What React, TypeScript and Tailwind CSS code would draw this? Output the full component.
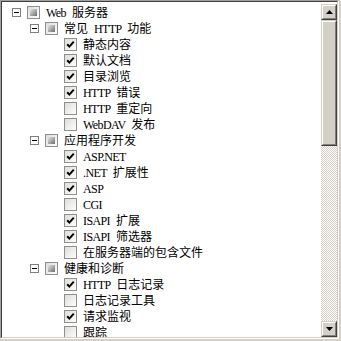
import React from 'react';

type State = 'on' | 'off' | 'mixed';

interface Item {
  label: string;
  level: 1 | 2 | 3;
  state: State;
  open?: boolean;
}

const items: Item[] = [
  { label: 'Web 服务器', level: 1, state: 'mixed', open: true },
  { label: '常见 HTTP 功能', level: 2, state: 'mixed', open: true },
  { label: '静态内容', level: 3, state: 'on' },
  { label: '默认文档', level: 3, state: 'on' },
  { label: '目录浏览', level: 3, state: 'on' },
  { label: 'HTTP 错误', level: 3, state: 'on' },
  { label: 'HTTP 重定向', level: 3, state: 'off' },
  { label: 'WebDAV 发布', level: 3, state: 'off' },
  { label: '应用程序开发', level: 2, state: 'mixed', open: true },
  { label: 'ASP.NET', level: 3, state: 'on' },
  { label: '.NET 扩展性', level: 3, state: 'on' },
  { label: 'ASP', level: 3, state: 'on' },
  { label: 'CGI', level: 3, state: 'off' },
  { label: 'ISAPI 扩展', level: 3, state: 'on' },
  { label: 'ISAPI 筛选器', level: 3, state: 'on' },
  { label: '在服务器端的包含文件', level: 3, state: 'off' },
  { label: '健康和诊断', level: 2, state: 'mixed', open: true },
  { label: 'HTTP 日志记录', level: 3, state: 'on' },
  { label: '日志记录工具', level: 3, state: 'off' },
  { label: '请求监视', level: 3, state: 'on' },
  { label: '跟踪', level: 3, state: 'off' },
];

const indent = {
  1: 'pl-[10px]',
  2: 'pl-[28px]',
  3: 'pl-[47px]',
};

function Label({ text }: { text: string }) {
  // ascii runs get a thin serif face, cjk stays in Noto
  const parts = text.split(/([\x20-\x7e]+)/).filter(Boolean);
  return (
    <span className="whitespace-pre">
      {parts.map((p, i) =>
        /^[\x20-\x7e]+$/.test(p) ? (
          <span
            key={i}
            className="font-['Liberation_Serif',serif] tracking-[-0.6px] [word-spacing:3.6px]"
          >
            {p}
          </span>
        ) : (
          <span key={i}>{p}</span>
        )
      )}
    </span>
  );
}

function Check({ state }: { state: State }) {
  return (
    <svg width="13" height="13" viewBox="0 0 13 13" className="shrink-0">
      <defs>
        <linearGradient id="cbBg" x1="0" y1="0" x2="1" y2="1">
          <stop offset="0" stopColor="#dcdcd7" />
          <stop offset="1" stopColor="#ffffff" />
        </linearGradient>
        <linearGradient id="cbMix" x1="0" y1="0" x2="1" y2="1">
          <stop offset="0" stopColor="#e6e6e6" />
          <stop offset="1" stopColor="#6e6e6e" />
        </linearGradient>
      </defs>
      <rect x="0.5" y="0.5" width="12" height="12" fill="url(#cbBg)" stroke="#8e8f8f" />
      {state === 'on' && (
        <path d="M3.2 6.2 L5.4 8.6 L9.8 3.6" stroke="#000" strokeWidth="2" fill="none" />
      )}
      {state === 'mixed' && <rect x="3" y="3" width="7" height="7" fill="url(#cbMix)" />}
    </svg>
  );
}

function Expander() {
  return (
    <span className="w-[9px] h-[9px] border border-[#808080] bg-white flex items-center justify-center shrink-0">
      <span className="w-[5px] h-px bg-black" />
    </span>
  );
}

function ArrowButton({ up }: { up?: boolean }) {
  return (
    <div className="w-4 h-4 bg-[#d4d0c8] border border-t-[#d4d0c8] border-l-[#d4d0c8] border-r-[#404040] border-b-[#404040] shrink-0">
      <div className="w-full h-full border border-t-white border-l-white border-r-[#808080] border-b-[#808080] flex items-center justify-center">
        <svg width="7" height="4" viewBox="0 0 7 4">
          {up ? (
            <path d="M3.5 0 L7 4 L0 4 Z" fill="#000" />
          ) : (
            <path d="M0 0 L7 0 L3.5 4 Z" fill="#000" />
          )}
        </svg>
      </div>
    </div>
  );
}

function Scrollbar() {
  return (
    <div className="w-4 flex flex-col mt-[2px]">
      <ArrowButton up />
      <div className="flex-1 flex flex-col bg-[repeating-conic-gradient(#d4d0c8_0%_25%,#ffffff_0%_50%)] bg-[length:2px_2px]">
        <div className="h-[126px] bg-[#d4d0c8] border border-t-[#d4d0c8] border-l-[#d4d0c8] border-r-[#404040] border-b-[#404040]">
          <div className="w-full h-full border border-t-white border-l-white border-r-[#808080] border-b-[#808080]" />
        </div>
      </div>
      <ArrowButton />
    </div>
  );
}

export default function App() {
  return (
    <div className="w-[341px] h-[341px] bg-[#d4d0c8] overflow-hidden">
      <div className="w-[339px] h-[339px] border border-t-[#a0a0a0] border-l-[#a0a0a0] border-r-white border-b-white">
        <div className="w-full h-full border border-t-[#404040] border-l-[#404040] border-r-[#d4d0c8] border-b-[#d4d0c8] bg-white flex">
          <div className="flex-1 pt-[2px] overflow-hidden font-['Noto_Sans_CJK_SC',sans-serif] text-[12px] text-black">
            {items.map((it, i) => (
              <div key={i} className={`h-4 flex items-center leading-4 ${indent[it.level]}`}>
                {it.open ? <Expander /> : <span className="w-[9px] shrink-0" />}
                <span className="ml-[6px] flex">
                  <Check state={it.state} />
                </span>
                <span className="ml-[6px]">
                  <Label text={it.label} />
                </span>
              </div>
            ))}
          </div>
          <Scrollbar />
        </div>
      </div>
    </div>
  );
}
